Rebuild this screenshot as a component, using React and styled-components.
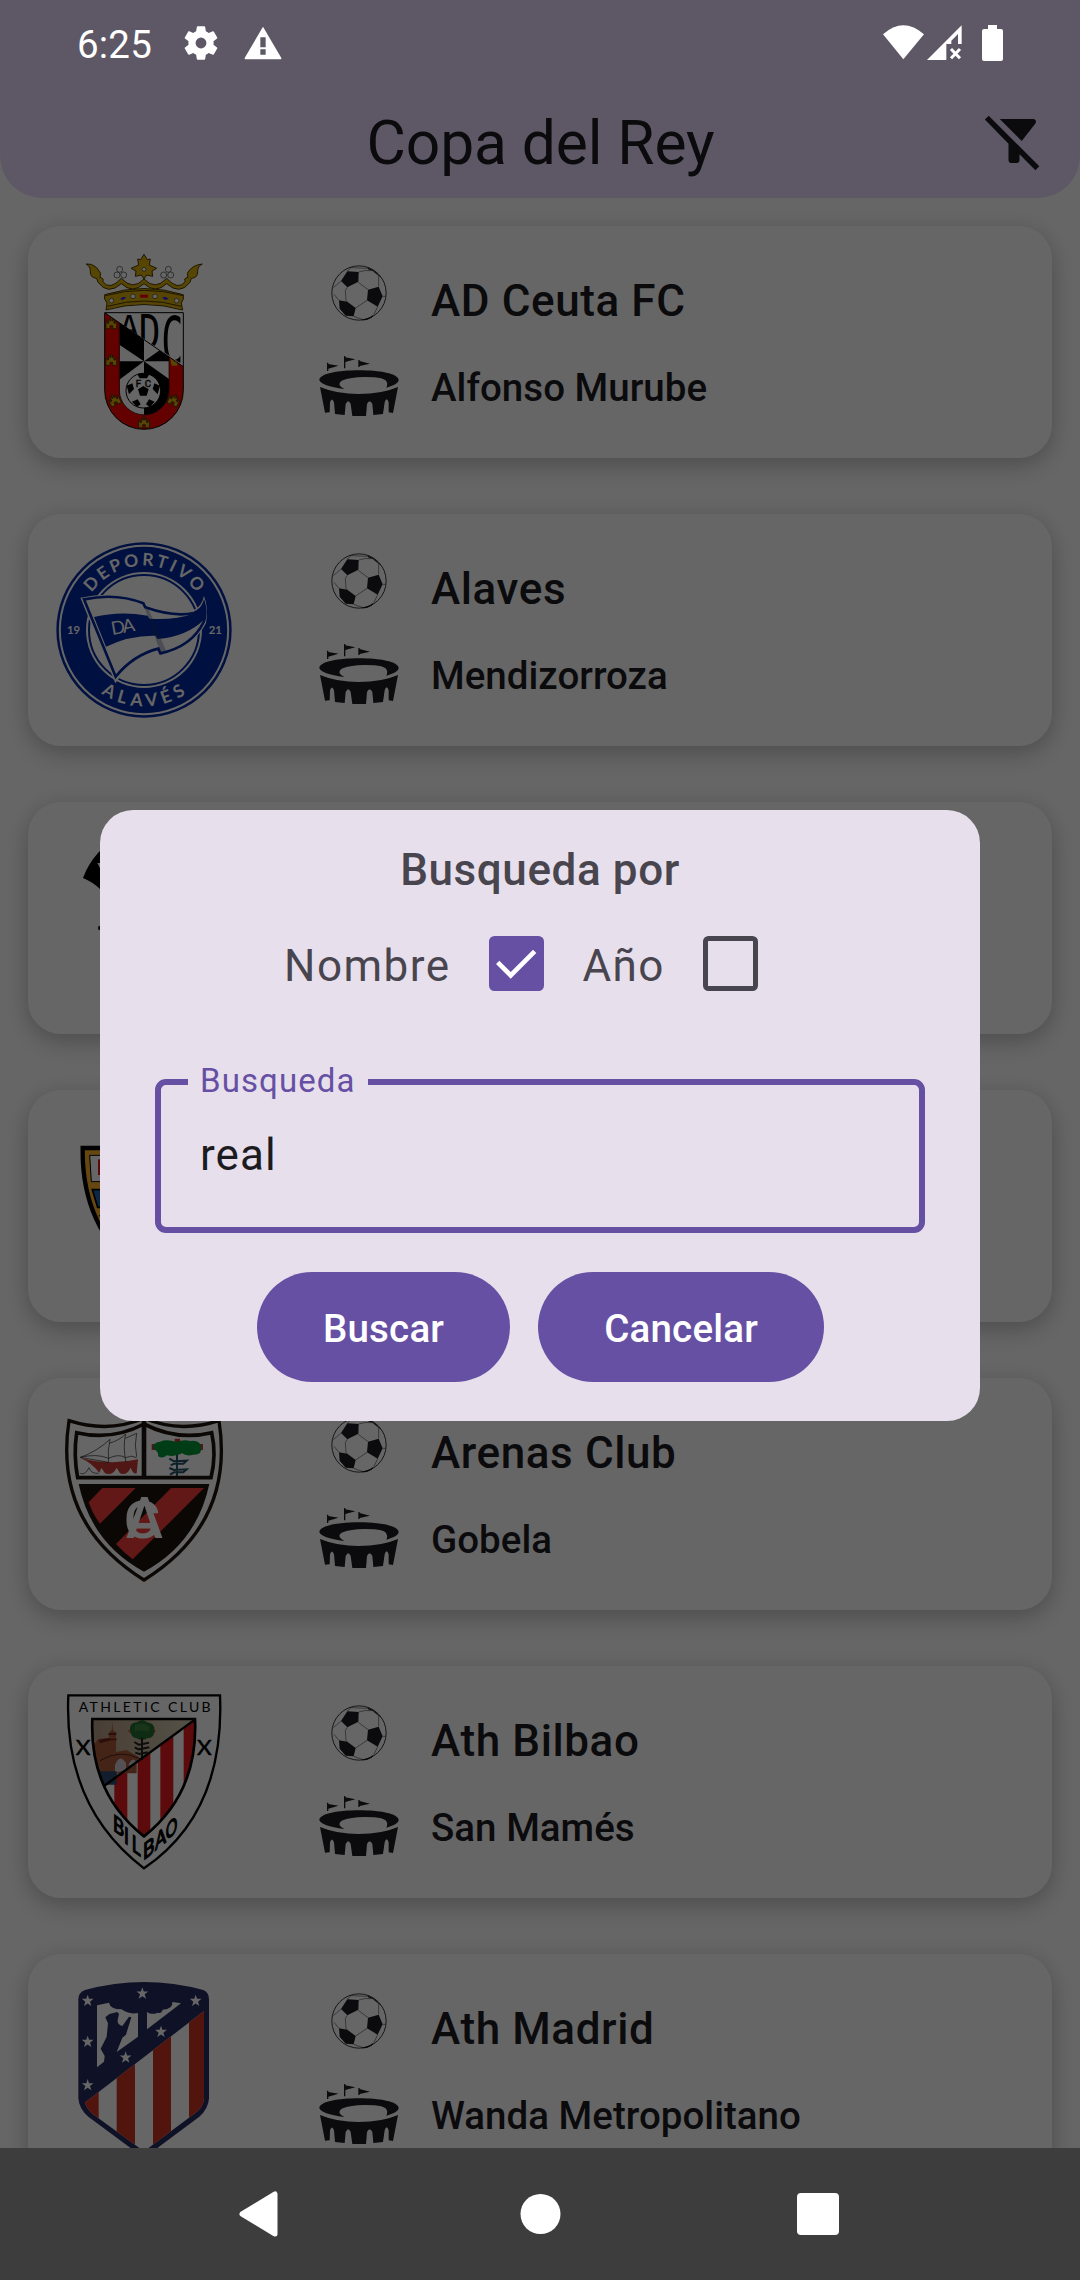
import React from "react";
import styled, { createGlobalStyle } from "styled-components";

const GlobalStyle = createGlobalStyle`
  * { box-sizing: border-box; }
  body { margin: 0; background: #fff; font-family: Roboto, "Noto Sans", sans-serif; }
`;

const Screen = styled.main`
  position: relative;
  display: flex;
  flex-direction: column;
  width: 1080px;
  height: 2280px;
  overflow: hidden;
  background: #fff;
  color: #1c1b1f;
`;

const TopBar = styled.header`
  flex: none;
  height: 198px;
  background: #eaddff;
  border-radius: 0 0 42px 42px;
`;

const StatusBar = styled.div`
  position: relative;
  z-index: 3;
  display: flex;
  align-items: center;
  justify-content: space-between;
  height: 86px;
  padding: 0 75px 0 77px;
  color: #fff;
`;

const StatusGroup = styled.div`
  display: flex;
  align-items: center;
  gap: ${(p) => p.$gap}px;
`;

const Clock = styled.time`
  font-size: 38.5px;
  line-height: 45px;
  letter-spacing: 0.2px;
  margin: 3px 6px 0 0;
`;

const TitleRow = styled.div`
  display: grid;
  grid-template-columns: 66px 1fr 66px;
  align-items: center;
  height: 110px;
  padding: 0 33px;
`;

const Title = styled.h1`
  grid-column: 2;
  margin: 5px 0 0 1px;
  text-align: center;
  font-size: 60.5px;
  line-height: 77px;
  font-weight: 400;
  letter-spacing: -0.1px;
`;

const List = styled.ul`
  flex: 1;
  min-height: 0;
  display: flex;
  flex-direction: column;
  gap: 56px;
  margin: 0;
  padding: 28px 28px 0;
  overflow: hidden;
  list-style: none;
`;

const Card = styled.li`
  flex: none;
  display: flex;
  height: 232px;
  padding: 28px;
  border-radius: 33px;
  background: #fff;
  box-shadow: 0 9px 24px rgba(0, 0, 0, 0.2), 0 0 20px rgba(0, 0, 0, 0.07);
`;

const Crest = styled.svg`
  flex: none;
  width: 176px;
  height: 176px;
`;

const IconColumn = styled.div`
  display: flex;
  flex-direction: column;
  align-items: center;
  gap: 35px;
  width: 83px;
  margin-left: 85px;
  padding-top: 11px;
`;

const TextColumn = styled.div`
  display: flex;
  flex-direction: column;
  gap: 26px;
  margin-left: 31px;
  padding-top: 14px;
`;

const TeamName = styled.h2`
  margin: 0;
  font-size: 44px;
  line-height: 66px;
  font-weight: 500;
  letter-spacing: 0.6px;
`;

const StadiumName = styled.p`
  margin: 0;
  font-size: 38.5px;
  line-height: 55px;
  font-weight: 500;
  letter-spacing: 0.02px;
`;

const Scrim = styled.div`
  position: absolute;
  inset: 0;
  z-index: 2;
  display: flex;
  align-items: center;
  justify-content: center;
  padding: 83px 0 132px;
  background: rgba(0, 0, 0, 0.6);
`;

const Dialog = styled.section`
  display: flex;
  flex-direction: column;
  align-items: center;
  width: 880px;
  height: 611px;
  padding-top: 33px;
  border-radius: 33px;
  background: #e7e0ec;
  color: #49454f;
`;

const DialogTitle = styled.h2`
  margin: 0 0 -1px;
  font-size: 44px;
  line-height: 55.5px;
  font-weight: 500;
  letter-spacing: 0.6px;
`;

const Options = styled.div`
  display: flex;
  align-items: center;
  height: 132px;
  padding-left: 1px;
`;

const OptionLabel = styled.label`
  padding-top: 5px;
  font-size: 44px;
  line-height: 66px;
  letter-spacing: 1.45px;
`;

const CheckTarget = styled.span`
  display: grid;
  place-items: center;
  width: 132px;
  height: 132px;
`;

const CheckBox = styled.span`
  display: grid;
  place-items: center;
  width: 55px;
  height: 55px;
  border: 5px solid ${(p) => (p.$checked ? "#6650a4" : "#49454f")};
  border-radius: 5.5px;
  background: ${(p) => (p.$checked ? "#6650a4" : "transparent")};
`;

const Field = styled.div`
  position: relative;
  display: flex;
  align-items: center;
  width: 770px;
  height: 154px;
  margin-top: 49.5px;
  padding: 0 39px 2px;
  border: 6px solid #6650a4;
  border-radius: 11px;
  color: #1c1b1f;
  font-size: 44px;
  line-height: 66px;
  letter-spacing: 1.1px;
`;

const FieldLabel = styled.span`
  position: absolute;
  top: -26px;
  left: 27px;
  width: 180px;
  padding-left: 12px;
  background: #e7e0ec;
  color: #6650a4;
  font-size: 33px;
  line-height: 44px;
  letter-spacing: 1.1px;
`;

const Actions = styled.div`
  display: flex;
  gap: 28px;
  margin-top: 39px;
  padding-left: 1px;
`;

const Button = styled.button`
  height: 110px;
  padding: 3px 66px 0;
  border: 0;
  border-radius: 55px;
  background: #6650a4;
  color: #fff;
  font-family: inherit;
  font-size: 38.5px;
  line-height: 55px;
  font-weight: 500;
  letter-spacing: 0.2px;
`;

const NavBar = styled.nav`
  position: relative;
  z-index: 3;
  flex: none;
  display: flex;
  align-items: center;
  justify-content: space-between;
  height: 132px;
  padding: 0 241px 0 238px;
  background: #3d3d3d;
`;

const GearIcon = () => (
  <svg width="42" height="42" viewBox="0 0 24 24" fill="#fff">
    <path d="M19.14 12.94c.04-.3.06-.61.06-.94 0-.32-.02-.64-.07-.94l2.03-1.58a.49.49 0 0 0 .12-.61l-1.92-3.32a.488.488 0 0 0-.59-.22l-2.39.96c-.5-.38-1.03-.7-1.62-.94l-.36-2.54a.484.484 0 0 0-.48-.41h-3.84c-.24 0-.43.17-.47.41l-.36 2.54c-.59.24-1.13.57-1.62.94l-2.39-.96c-.22-.08-.47 0-.59.22L2.74 8.87c-.12.21-.08.47.12.61l2.03 1.58c-.05.3-.09.63-.09.94s.02.64.07.94l-2.03 1.58a.49.49 0 0 0-.12.61l1.92 3.32c.12.22.37.29.59.22l2.39-.96c.5.38 1.03.7 1.62.94l.36 2.54c.05.24.24.41.48.41h3.84c.24 0 .44-.17.47-.41l.36-2.54c.59-.24 1.13-.56 1.62-.94l2.39.96c.22.08.47 0 .59-.22l1.92-3.32c.12-.22.07-.47-.12-.61l-2.01-1.58zM12 15.1A3.1 3.1 0 1 1 12 8.9a3.1 3.1 0 0 1 0 6.2z" />
  </svg>
);

const WarningIcon = () => (
  <svg width="38" height="34" viewBox="0 0 114 102" fill="#fff">
    <path
      fillRule="evenodd"
      d="M57 2L112 96Q113 100 108 100H6Q1 100 2 96ZM49 34V64H65V34ZM49 70V86H65V70Z"
    />
  </svg>
);

// Wi-Fi fan, mobile signal without service, full battery
const ConnectivityIcons = () => (
  <svg width="122" height="36" viewBox="0 0 366 108" fill="#fff">
    <path d="M0 28Q61-26 123 28L61 103Z" />
    <path
      fillRule="evenodd"
      d="M132 105L236 1V57H225V27L205 47V57H190V105Z"
    />
    <path d="M204 72L231 100M231 72L204 100" stroke="#fff" strokeWidth="9" />
    <path d="M315 0H342V12H354Q360 12 360 18V102Q360 108 354 108H303Q297 108 297 102V18Q297 12 303 12H315Z" />
  </svg>
);

const FilterOffIcon = () => (
  <svg width="66" height="66" viewBox="0 0 24 24" fill="#1c1b1f">
    <path d="M19.79 5.61C20.3 4.95 19.83 4 19 4H6.83l7.97 7.97 4.99-6.36zM2.81 2.81L1.39 4.22 10 13v6c0 .55.45 1 1 1h2c.55 0 1-.45 1-1v-2.17l5.78 5.78 1.41-1.41L2.81 2.81z" />
  </svg>
);

const CheckMark = () => (
  <svg width="44" height="34" viewBox="0 0 132 102" fill="none">
    <path d="M11 46L50 85L122 13" stroke="#fff" strokeWidth="14" />
  </svg>
);

const BallIcon = () => (
  <svg width="56" height="56" viewBox="93 74 168 168" fill="#1c1b1f">
    <circle cx="177" cy="158" r="81.5" fill="none" stroke="#1c1b1f" strokeWidth="2.6" />
    <path d="M142 93L176 95L175 124L142 141L123 122ZM204 148L236 139L248 168L233 199L201 180ZM117 180L142 184L167 203L161 228L137 226L119 205ZM204 82Q228 90 243 114L232 103Q218 90 204 87ZM186 237Q206 236 222 222L215 232Q201 241 186 240Z" />
    <path
      d="M142 141L136 150L138 182M175 126L204 148M201 180L167 203M123 122L100 142M176 95Q196 88 215 91M236 139V108M248 168L258 168M233 199L222 222M161 228L186 237M117 180L102 162M142 93L152 82L204 84M138 182L142 184"
      fill="none"
      stroke="#1c1b1f"
      strokeWidth="1.5"
    />
  </svg>
);

const StadiumIcon = () => (
  <svg width="80" height="60" viewBox="897 423 240 180" fill="#1c1b1f">
    <path d="M921 443H925V447L956 452L925 461V468H921ZM972 423H976V427L1006 433L976 441V460H972ZM1015 435H1019V438L1050 446L1019 453V456H1015Z" />
    <path d="M898 495C898 456 1136 456 1136 495C1136 503 1124 511 1099 518Q1112 490 1063 487Q1000 482 965 497Q948 508 973 522Q903 513 898 495Z" />
    <path d="M900 516Q950 537 1017 537Q1085 537 1134 516L1119 594L1106 592L1106 562Q1100 543 1094 562L1089 597L1060 600L1057 567Q1049 550 1041 567L1038 603H997L992 567Q985 550 977 567L974 600L945 597L942 562Q936 545 930 562L929 592L915 593Z" />
  </svg>
);

const Castle = ({ x, y, r = 0 }) => (
  <path
    transform={`translate(${x} ${y}) rotate(${r})`}
    d="M-16 16V-5H-12V0H-8V-12H-4V-7H-2V-16H2V-7H4V-12H8V0H12V-5H16V16H4V7H-4V16Z"
    fill="#d9ac0c"
    stroke="#3d3000"
    strokeWidth="2.5"
  />
);

const CeutaCrest = () => (
  <Crest viewBox="108 117 528 528">
    <defs>
      <clipPath id="ceutaShield">
        <path d="M254 293H490V525A118 118 0 0 1 254 525Z" />
      </clipPath>
      <clipPath id="ceutaInner">
        <path d="M298 322L447 424V525A74 74 0 0 1 298 525Z" />
      </clipPath>
      <clipPath id="ceutaTop">
        <path d="M254 293H490V450Z" />
      </clipPath>
    </defs>
    <g fill="#d9ac0c" stroke="#4a3a00" strokeWidth="3">
      <path d="M198 147Q215 144 230 158L242 175L240 187Q255 192 248 200Q270 228 304 190Q338 228 372 192Q406 228 440 190Q474 228 496 200Q489 190 504 187L502 175Q515 150 547 147Q532 154 533 170Q534 188 514 190L510 202Q480 242 440 206Q406 238 372 206Q338 238 304 206Q264 242 234 202L230 190Q210 188 211 170Q212 154 198 147Z" />
      <path d="M372 118L382 134L391 132L388 150L410 160L396 168L398 184L380 180L372 192L364 180L346 184L348 168L333 160L356 150L353 132L362 134Z" />
      <path d="M254 239Q372 202 490 239V252L484 264L488 285Q372 252 258 285L261 264L254 252Z" />
    </g>
    <path d="M256 242Q372 210 489 242M262 274Q372 242 484 274" fill="none" stroke="#4a3a00" strokeWidth="3" />
    <g fill="#fff" stroke="#333" strokeWidth="2">
      <circle cx="372" cy="163" r="6" />
      <circle cx="299" cy="163" r="9" /><circle cx="291" cy="180" r="9" /><circle cx="311" cy="180" r="9" />
      <circle cx="445" cy="163" r="9" /><circle cx="431" cy="180" r="9" /><circle cx="452" cy="180" r="9" />
      <circle cx="274" cy="257" r="7" /><circle cx="339" cy="244" r="7" /><circle cx="405" cy="244" r="7" /><circle cx="470" cy="257" r="7" />
    </g>
    <rect x="360" y="239" width="24" height="9" fill="#f00" />
    <path d="M300 252L310 245L319 248L308 255ZM426 248L436 245L446 252L436 255Z" fill="#22f" />
    <g clipPath="url(#ceutaShield)">
      <path d="M254 293H490V650H254Z" fill="#f80000" />
      <g clipPath="url(#ceutaInner)">
        <path d="M298 300H450V605H298Z" fill="#fff" />
        <path d="M372 439L298 389V322L372 373ZM372 439L420 405L450 425V439ZM372 439H298V494ZM372 439L450 494V610H372Z" />
      </g>
      <path d="M298 322V525A74 74 0 0 0 447 525V424" fill="none" stroke="#000" strokeWidth="2" />
      <path d="M254 293H490V455Z" fill="#fff" />
      <path d="M254 293L490 455" stroke="#000" strokeWidth="3" />
      <g clipPath="url(#ceutaTop)" fontFamily="DejaVu Sans Mono, monospace" fontSize="100" fill="#000">
        <text transform="translate(298 368) scale(.98 .97)">A</text>
        <text transform="translate(356 402) scale(1.08 1.42)">D</text>
        <text transform="translate(424 446) scale(1.1 1.98)">C</text>
      </g>
    </g>
    <circle cx="370" cy="527" r="52" fill="#fff" stroke="#000" strokeWidth="3" />
    <path d="M370 513L386 523L380 542H360L354 523ZM352 478Q370 471 388 478L381 490H359ZM320 512L337 505L342 522L327 538ZM420 512L403 505L398 522L413 538ZM336 560L353 553L362 568L351 576ZM404 560L387 553L378 568L389 576Z" />
    <g fontFamily="Roboto" fontSize="29" fill="#fff" stroke="#000" strokeWidth="2">
      <text x="347" y="516">F</text>
      <text x="374" y="516">C</text>
    </g>
    <Castle x={274} y={325} />
    <Castle x={274} y={435} />
    <Castle x={283} y={555} r={-25} />
    <Castle x={372} y={622} />
    <Castle x={462} y={555} r={25} />
    <path d="M450 430L472 445V452H455Z" fill="#d9ac0c" />
    <path d="M254 293H490V525A118 118 0 0 1 254 525Z" fill="none" stroke="#000" strokeWidth="3" />
  </Crest>
);

const AlavesCrest = () => (
  <Crest viewBox="108 66 528 528">
    <defs>
      <path id="alavesTop" d="M179 330A193 193 0 0 1 565 330" />
      <path id="alavesBottom" d="M143 330A229 229 0 0 0 601 330" />
    </defs>
    <circle cx="372" cy="330" r="263" fill="#0028a0" />
    <circle cx="372" cy="330" r="252.5" fill="none" stroke="#fff" strokeWidth="6" />
    <circle cx="372" cy="330" r="174" fill="#fff" />
    <circle cx="372" cy="330" r="165" fill="#fff" stroke="#0028a0" strokeWidth="6" />
    <path d="M181 233Q290 210 374 246L378 258Q460 285 520 270Q545 260 552 228Q566 262 558 310Q520 385 420 405L412 392Q340 410 286 490Z" fill="#fff" />
    <path d="M192 238Q290 218 370 250L376 262Q460 292 522 279Q544 270 552 250Q560 280 551 306Q515 380 421 400L415 386Q340 405 287 470Z" fill="#fff" stroke="#0028a0" strokeWidth="8" />
    <path d="M222 291Q300 272 383 287L388 296Q460 302 520 281Q544 272 552 250Q560 275 551 300Q500 350 412 357L407 347Q330 345 258 380Z" fill="#0028a0" />
    <path d="M371 256L384 263L438 392L421 397Z" fill="#263a68" opacity=".3" />
    <g fill="#fff" fontFamily="Lato, sans-serif" fontWeight="700">
      <text fontSize="52" letterSpacing="8.5" textAnchor="middle">
        <textPath href="#alavesTop" startOffset="50.7%">DEPORTIVO</textPath>
      </text>
      <text fontSize="53" letterSpacing="15" textAnchor="middle">
        <textPath href="#alavesBottom" startOffset="50.8%">ALAVÉS</textPath>
      </text>
      <text x="141" y="342" fontSize="34">19</text>
      <text x="566" y="342" fontSize="34">21</text>
      <text transform="translate(277 345) rotate(-10)" fontSize="55" fontWeight="400" letterSpacing="-7">DA</text>
    </g>
  </Crest>
);

// Round black badge; only its left edge shows beside the dialog
const BlackCrest = () => (
  <Crest viewBox="-12 120 528 528">
    <path d="M69 264Q100 180 190 130L250 250L120 297Q98 276 69 264Z" />
    <path d="M112 219H140V235H120Z" fill="#fff" />
    <circle cx="121" cy="414" r="7" />
  </Crest>
);

const GoldCrest = () => (
  <Crest viewBox="108 -36 528 528">
    <path d="M188 54H556Q560 300 372 440Q184 300 188 54Z" fill="#ffb22b" stroke="#000" strokeWidth="13" />
    <path d="M209 76H350V155H214Z" fill="#fff" stroke="#000" strokeWidth="3" />
    <path d="M234 88H300V135H234Z" fill="#e01b22" />
    <path d="M217 179H350V232H233Z" fill="#1c62a8" stroke="#000" strokeWidth="5" />
    <path d="M236 258L260 250" stroke="#000" strokeWidth="3" />
  </Crest>
);

const ArenasCrest = () => (
  <Crest viewBox="108 828 528 528">
    <path d="M147 872Q265 910 372 865Q480 910 597 872Q645 1180 372 1350Q100 1180 147 872Z" fill="#fff" stroke="#1d120c" strokeWidth="10" />
    <path d="M170 908Q275 933 372 882Q470 933 575 908Q590 975 573 1043H173Q160 975 170 908Z" fill="#fff" stroke="#1d120c" strokeWidth="11" />
    <path d="M372 870V1043" stroke="#1d120c" strokeWidth="14" />
    <path d="M176 1062H568Q530 1240 372 1325Q214 1240 176 1062Z" fill="#1d120c" />
    <path d="M247 1074H347L240 1181Q218 1152 206 1117ZM453 1074H552L338 1288Q312 1268 288 1242Z" fill="#f23e37" />
    <path d="M180 983Q270 1008 354 988L350 1030Q340 1034 332 1013Q320 1038 300 1030L290 1013Q278 1038 255 1030L244 1013L238 1028Q215 998 180 983Z" fill="#c83a35" />
    <g fill="none" stroke="#222" strokeWidth="2">
      <path d="M181 982Q230 965 270 928Q262 962 266 997ZM268 940Q300 930 317 912Q308 950 318 997M316 925L350 910Q342 945 350 980M181 982Q230 970 266 985Q295 970 317 983Q335 974 350 983M181 1030Q195 1037 207 1013Q213 1032 236 1030" />
    </g>
    <path d="M395 942H549V960H395ZM464 926H480V936H464Z" fill="#c83a35" />
    <path d="M399 955Q397 938 420 935Q440 926 470 936Q490 928 510 933Q540 928 544 952Q547 975 520 974Q500 980 486 970Q465 982 440 976Q427 988 414 978Q418 967 399 955Z" fill="#009a38" />
    <path d="M471 974V1038M448 986L462 994L500 992L490 1001H462L452 1006M448 1014L462 1020L500 1018L490 1027H462L450 1034" fill="none" stroke="#245064" strokeWidth="6" />
    <g fill="#fff" fontFamily="Roboto" fontWeight="500" textAnchor="middle">
      <text transform="translate(366 1224) scale(1.08 1)" fontSize="156">C</text>
      <text transform="translate(373 1225) scale(.98 1)" fontSize="170">A</text>
    </g>
  </Crest>
);

const AthleticCrest = () => (
  <Crest viewBox="108 72 528 528">
    <defs>
      <clipPath id="athleticInner">
        <path d="M217 147H525Q535 370 372 499Q208 370 217 147Z" />
      </clipPath>
      <linearGradient id="athleticSky" x1="0" y1="0" x2="1" y2="0">
        <stop offset="0" stopColor="#b59a83" />
        <stop offset="1" stopColor="#d3ceb6" />
      </linearGradient>
    </defs>
    <path d="M145 76H600Q615 430 372 595Q130 410 145 76Z" fill="#fff" stroke="#000" strokeWidth="7" />
    <g clipPath="url(#athleticInner)">
      <path d="M210 140H530V510H210Z" fill="#fff" />
      <path d="M283 140H322V510H283ZM353 140H391V510H353ZM421 140H460V510H421ZM491 140H530V510H491Z" fill="#e5191f" />
      <path d="M210 140H535V145L260 344L210 380Z" fill="url(#athleticSky)" />
      <path d="M234 207L267 203V188L275 180L277 153L279 180L288 188V246L320 240L357 262L350 275V310H210V240Z" fill="#ad5b3c" />
      <path d="M236 210L268 204V212L240 220ZM266 206H290V211H266ZM265 190L289 188V194L265 195Z" fill="#6b221b" />
      <path d="M285 308V285Q300 248 318 280V300M325 285Q338 258 348 275L338 290Z" fill="#cfcad2" />
      <path d="M220 304H290V344H220Z" fill="#2d4b70" />
      <path d="M240 272Q300 235 362 267" stroke="#4e211b" strokeWidth="3" fill="none" />
      <path d="M322 184L332 176L332 190ZM408 184L400 174L400 190Z" fill="#d66129" />
      <path d="M330 180Q328 158 350 157Q367 145 382 157Q405 160 403 182Q405 202 382 205Q367 214 350 205Q332 202 330 180Z" fill="#256b31" />
      <path d="M345 165Q365 155 380 166Q396 172 385 185Q360 178 345 185Z" fill="#4d964a" opacity=".6" />
      <path d="M366 203V270M343 216L356 224L387 218M344 232L356 238L388 232M346 248L358 252L383 247" fill="none" stroke="#252320" strokeWidth="6" />
      <path d="M252 348L530 145" stroke="#000" strokeWidth="7" />
    </g>
    <path d="M217 147H525Q535 370 372 499Q208 370 217 147Z" fill="none" stroke="#000" strokeWidth="8" />
    <g fontFamily="Lato, sans-serif" fill="#000">
      <text x="176" y="126" fontSize="42" textLength="396" lengthAdjust="spacing">ATHLETIC CLUB</text>
      <g fontSize="62" stroke="#000" strokeWidth="1.5">
        <text x="167" y="254" textLength="44" lengthAdjust="spacingAndGlyphs">X</text>
        <text x="531" y="254" textLength="44" lengthAdjust="spacingAndGlyphs">X</text>
      </g>
      <g fontSize="70" stroke="#000" strokeWidth="4">
        <text transform="translate(279 480) skewY(36) scale(.74 .98)">B</text>
        <text transform="translate(312 517) skewY(36) scale(.74 .98)">I</text>
        <text transform="translate(335 541) skewY(36) scale(.74 .98)">L</text>
        <text transform="translate(369 572) skewY(-38) scale(.76 .98)">B</text>
        <text transform="translate(405 542) skewY(-38) scale(.7 .98)">A</text>
        <text transform="translate(437 512) skewY(-38) scale(.62 .98)">O</text>
      </g>
    </g>
  </Crest>
);

const STARS = [[203, 182], [367, 160], [527, 182], [203, 305], [203, 435], [317, 352], [423, 275]];

const AtleticoCrest = () => (
  <Crest viewBox="108 126 528 528">
    <defs>
      <clipPath id="atleticoStripes">
        <path d="M194 488L552 213V475Q550 503 525 520L372 634L215 520Q202 507 194 488Z" />
      </clipPath>
    </defs>
    <path d="M195 150Q372 102 550 150Q567 158 567 178V475Q565 507 538 530L372 654L205 530Q177 507 175 475V178Q175 158 195 150Z" fill="#272f61" />
    <g clipPath="url(#atleticoStripes)">
      <path d="M180 200H560V654H180Z" fill="#fff" />
      <path d="M180 200H236V654H180ZM290 200H345V654H290ZM399 200H453V654H399ZM507 200H560V654H507Z" fill="#cb3524" />
    </g>
    <path d="M231 196L267 188Q270 207 305 208Q325 224 354 219V290L290 336L307 293L318 284L334 232L327 230L307 258Q292 255 293 240L297 222L292 216L268 222L256 232L264 250L260 290L242 326L254 348L252 365L231 382Z" fill="#fff" />
    <path d="M381 216Q394 226 413 218Q424 222 428 209Q460 207 457 186L483 190L381 268Z" fill="#fff" />
    {STARS.map(([x, y]) => (
      <path
        key={`${x}-${y}`}
        transform={`translate(${x} ${y})`}
        d="M0-18L4.2-5.5L17.5-5.5L7 3L11 16L0 8.5L-11 16L-7 3L-17.5-5.5L-4.2-5.5Z"
        fill="#fff"
      />
    ))}
  </Crest>
);

const TEAMS = [
  { id: "ceuta", name: "AD Ceuta FC", stadium: "Alfonso Murube", Logo: CeutaCrest },
  { id: "alaves", name: "Alaves", stadium: "Mendizorroza", Logo: AlavesCrest },
  { id: "black", Logo: BlackCrest },
  { id: "gold", Logo: GoldCrest },
  { id: "arenas", name: "Arenas Club", stadium: "Gobela", Logo: ArenasCrest },
  { id: "bilbao", name: "Ath Bilbao", stadium: "San Mamés", Logo: AthleticCrest },
  { id: "madrid", name: "Ath Madrid", stadium: "Wanda Metropolitano", Logo: AtleticoCrest },
];

const TeamCard = ({ name, stadium, Logo }) => (
  <Card>
    <Logo />
    {name && (
      <>
        <IconColumn>
          <BallIcon />
          <StadiumIcon />
        </IconColumn>
        <TextColumn>
          <TeamName>{name}</TeamName>
          <StadiumName>{stadium}</StadiumName>
        </TextColumn>
      </>
    )}
  </Card>
);

const Option = ({ label, checked }) => (
  <>
    <OptionLabel>{label}</OptionLabel>
    <CheckTarget>
      <CheckBox role="checkbox" aria-checked={checked} aria-label={label} $checked={checked}>
        {checked && <CheckMark />}
      </CheckBox>
    </CheckTarget>
  </>
);

export default function App() {
  return (
    <Screen>
      <GlobalStyle />
      <TopBar>
        <StatusBar>
          <StatusGroup $gap={22}>
            <Clock>6:25</Clock>
            <GearIcon />
            <WarningIcon />
          </StatusGroup>
          <StatusGroup $gap={0}>
            <ConnectivityIcons />
          </StatusGroup>
        </StatusBar>
        <TitleRow>
          <Title>Copa del Rey</Title>
          <FilterOffIcon />
        </TitleRow>
      </TopBar>
      <List>
        {TEAMS.map((team) => (
          <TeamCard key={team.id} {...team} />
        ))}
      </List>
      <Scrim>
        <Dialog role="dialog">
          <DialogTitle>Busqueda por</DialogTitle>
          <Options>
            <Option label="Nombre" checked />
            <Option label="Año" checked={false} />
          </Options>
          <Field>
            <FieldLabel>Busqueda</FieldLabel>
            real
          </Field>
          <Actions>
            <Button>Buscar</Button>
            <Button>Cancelar</Button>
          </Actions>
        </Dialog>
      </Scrim>
      <NavBar>
        <svg width="44" height="48" viewBox="0 0 44 48">
          <path d="M4 24L37 4V44Z" fill="#fff" stroke="#fff" strokeWidth="5" strokeLinejoin="round" />
        </svg>
        <svg width="42" height="42" viewBox="0 0 42 42">
          <circle cx="21.5" cy="21" r="20" fill="#fff" />
        </svg>
        <svg width="42" height="42" viewBox="0 0 42 42">
          <rect width="42" height="42" rx="4" fill="#fff" />
        </svg>
      </NavBar>
    </Screen>
  );
}
